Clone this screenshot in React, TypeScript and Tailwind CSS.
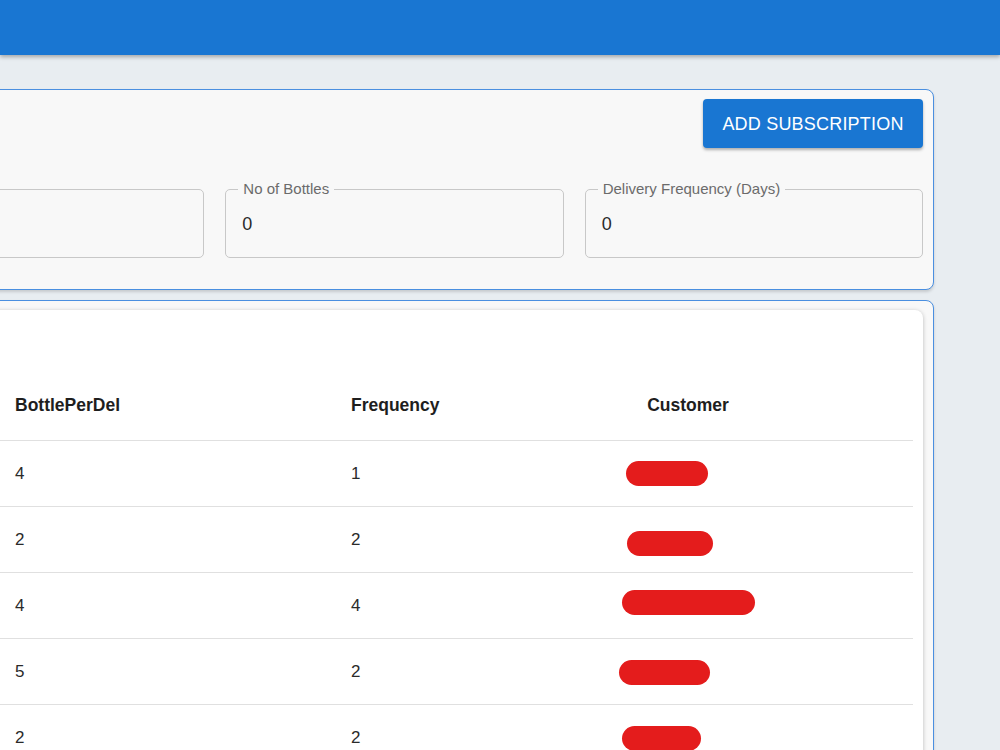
import { ReactNode } from "react";

type Row = { bottles: number; frequency: number; blob: { left: number; width: number; shift: number } };

const rows: Row[] = [
  { bottles: 4, frequency: 1, blob: { left: 51, width: 82, shift: 0 } },
  { bottles: 2, frequency: 2, blob: { left: 52, width: 86, shift: 4 } },
  { bottles: 4, frequency: 4, blob: { left: 47, width: 133, shift: -3 } },
  { bottles: 5, frequency: 2, blob: { left: 44, width: 91, shift: 1 } },
  { bottles: 2, frequency: 2, blob: { left: 47, width: 79, shift: 1 } },
];

function OutlinedField({ label, value }: { label?: string; value: string }) {
  return (
    <div className="relative h-[69px] rounded-[5px] border border-[#c8c8c8] flex items-center pl-[16px] pt-[1px]">
      {label && (
        <span className="absolute -top-[9px] left-[12px] px-[5px] bg-[#f8f8f8] text-[15px] leading-[16px] text-[#6b6b6b]">
          {label}
        </span>
      )}
      <span className="text-[18px] text-[#2a2a2a]">{value}</span>
    </div>
  );
}

function Cell({ children, className = "" }: { children?: ReactNode; className?: string }) {
  return <div className={`flex items-center pl-[16px] ${className}`}>{children}</div>;
}

export default function App() {
  return (
    <div className="min-h-screen w-[1000px] overflow-hidden bg-[#e8edf1] font-['Liberation_Sans',Arial,sans-serif]">
      <header className="h-[55px] bg-[#1976d2] shadow-[0_2px_4px_rgba(0,0,0,0.3)] relative z-10" />

      <main className="pt-[34px] ml-[-145px] w-[1079px]">
        <section className="rounded-[8px] border border-[#4a8fe0] bg-[#f8f8f8] pt-[9px] pr-[10px] pb-[31px] pl-[10px] shadow-[0_2px_3px_rgba(0,0,0,0.15)]">
          <div className="flex justify-end">
            <button className="h-[49px] w-[220px] rounded-[4px] bg-[#1976d2] pt-[1px] text-white text-[18px] tracking-[0.2px] shadow-[0_2px_3px_rgba(0,0,0,0.3)]">
              ADD SUBSCRIPTION
            </button>
          </div>
          <div className="mt-[41px] grid grid-cols-3 gap-[21px]">
            <OutlinedField value="" />
            <OutlinedField label="No of Bottles" value="0" />
            <OutlinedField label="Delivery Frequency (Days)" value="0" />
          </div>
        </section>

        <section className="mt-[10px] rounded-[8px] border border-[#4a8fe0] bg-[#f8f8f8] pt-[9px] pr-[10px] pl-[10px] shadow-[0_2px_3px_rgba(0,0,0,0.15)]">
          <div className="rounded-t-[8px] bg-white pt-[61px] pr-[10px] shadow-[0_1px_4px_rgba(0,0,0,0.25)]">
            <div className="flex h-[70px] border-b border-[#e0e0e0] text-[17.5px] font-bold text-[#1e1e1e]">
              <Cell className="w-[133px]" />
              <Cell className="w-[336px]">BottlePerDel</Cell>
              <Cell className="w-[240px]">Frequency</Cell>
              <div className="w-[226px] flex items-center justify-center">Customer</div>
              <Cell className="flex-1" />
            </div>
            {rows.map((row, i) => (
              <div key={i} className="flex h-[66px] border-b border-[#e0e0e0] text-[17px] text-[#2a2a2a]">
                <Cell className="w-[133px]" />
                <Cell className="w-[336px]">{row.bottles}</Cell>
                <Cell className="w-[240px]">{row.frequency}</Cell>
                <div className="w-[226px] flex items-center">
                  <div
                    className="h-[25px] rounded-full bg-[#e41c1c]"
                    style={{ marginLeft: row.blob.left, width: row.blob.width, transform: `translateY(${row.blob.shift}px)` }}
                  />
                </div>
                <div className="flex-1" />
              </div>
            ))}
          </div>
        </section>
      </main>
    </div>
  );
}
